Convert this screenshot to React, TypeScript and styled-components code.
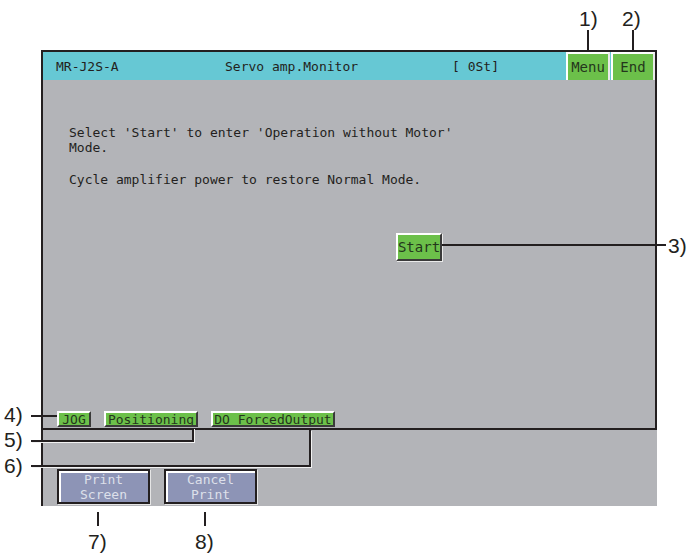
import React from 'react';
import styled, { createGlobalStyle } from 'styled-components';

const teal = '#66c8d4';
const panelGray = '#b3b4b8';
const green = '#6cc04a';
const lavender = '#8d94b6';
const ink = '#231f20';
const mono = `'DejaVu Sans Mono', 'Liberation Mono', monospace`;

const GlobalStyle = createGlobalStyle`
  html, body {
    margin: 0;
    padding: 0;
    background: #ffffff;
  }
`;

const Page = styled.div`
  position: relative;
  width: 692px;
  height: 554px;
  padding: 50px 0 0 41px;
  box-sizing: border-box;
  overflow: hidden;
`;

const Screen = styled.div`
  width: 616px;
  display: flex;
  flex-direction: column;
  font-family: ${mono};
  font-size: 13px;
  color: ${ink};
`;

const Header = styled.div`
  height: 30px;
  box-sizing: border-box;
  background: ${teal};
  border: 2px solid ${ink};
  border-bottom: none;
  display: flex;
  align-items: stretch;
  padding-left: 13px;
`;

const HeaderText = styled.div<{ $w?: number }>`
  display: flex;
  align-items: center;
  ${p => (p.$w ? `width: ${p.$w}px;` : 'flex: 1;')}
  white-space: pre;
`;

const GreenKey = styled.div<{ $w: number }>`
  width: ${p => p.$w}px;
  box-sizing: border-box;
  background: ${green};
  border-top: 2px solid #ffffff;
  border-left: 2px solid #ffffff;
  border-right: 2px solid #3a3a3a;
  border-bottom: 2px solid #3a3a3a;
  display: flex;
  align-items: center;
  justify-content: center;
  color: #24361c;
  white-space: pre;
`;

const HeaderKey = styled(GreenKey)`
  margin-left: 1px;
  font-size: 14px;
  border-right-color: #eaeaea;
  border-bottom: none;
`;

const Body = styled.div`
  height: 350px;
  box-sizing: border-box;
  background: ${panelGray};
  border: 2px solid ${ink};
  border-top: none;
  display: flex;
  flex-direction: column;
  padding: 45px 0 0 26px;
`;

const Message = styled.p`
  margin: 0;
  line-height: 15px;
  white-space: pre;
`;

const Paragraph = styled.div<{ $gap?: number }>`
  margin-top: ${p => p.$gap ?? 0}px;
`;

const StartKey = styled(GreenKey)`
  height: 28px;
  margin: 46px 0 0 327px;
  font-size: 14px;
  box-shadow: 1px 1px 0 #eaeaea;
`;

const ModeRow = styled.div`
  margin-top: auto;
  margin-left: -12px;
  margin-bottom: 1px;
  display: flex;
  gap: 13px;
`;

const ModeKey = styled(GreenKey)`
  height: 16px;
  line-height: 1;
  overflow: hidden;
`;

const Footer = styled.div`
  height: 76px;
  box-sizing: border-box;
  background: ${panelGray};
  border-left: 2px solid ${ink};
  display: flex;
  gap: 14px;
  padding: 39px 0 0 14px;
`;

const PrintKey = styled.div`
  width: 93px;
  height: 35px;
  box-sizing: border-box;
  background: ${lavender};
  border: 2px solid ${ink};
  box-shadow: inset 2px 2px 0 #ffffff, 1px 1px 0 #e5e5e5;
  display: flex;
  flex-direction: column;
  align-items: center;
  justify-content: center;
  color: #dde0ea;
  font-size: 13px;
  line-height: 15px;
  white-space: pre;
`;

const Callout = styled.span<{ $x: number; $y: number }>`
  position: absolute;
  left: ${p => p.$x}px;
  top: ${p => p.$y}px;
  font-family: 'Liberation Sans', Arial, sans-serif;
  font-size: 21px;
  line-height: 21px;
  color: ${ink};
`;

const Leader = styled.div<{ $x: number; $y: number; $w: number; $h: number }>`
  position: absolute;
  left: ${p => p.$x}px;
  top: ${p => p.$y}px;
  width: ${p => p.$w}px;
  height: ${p => p.$h}px;
  background: ${ink};
`;

const Elbow = styled.div<{ $x: number; $y: number; $w: number; $h: number }>`
  position: absolute;
  left: ${p => p.$x}px;
  top: ${p => p.$y}px;
  width: ${p => p.$w}px;
  height: ${p => p.$h}px;
  border-right: 2px solid ${ink};
  border-bottom: 2px solid ${ink};
  box-shadow: 1px 1px 0 #f2f2f2;
`;

export default function App() {
  return (
    <>
      <GlobalStyle />
      <Page>
        <Screen>
          <Header>
            <HeaderText $w={169}>MR-J2S-A</HeaderText>
            <HeaderText $w={227}>Servo amp.Monitor</HeaderText>
            <HeaderText>[ 0St]</HeaderText>
            <HeaderKey $w={44}>Menu</HeaderKey>
            <HeaderKey $w={44}>End</HeaderKey>
          </Header>
          <Body>
            <Paragraph>
              <Message>Select 'Start' to enter 'Operation without Motor'</Message>
              <Message>Mode.</Message>
            </Paragraph>
            <Paragraph $gap={17}>
              <Message>Cycle amplifier power to restore Normal Mode.</Message>
            </Paragraph>
            <StartKey $w={46}>Start</StartKey>
            <ModeRow>
              <ModeKey $w={34}>JOG</ModeKey>
              <ModeKey $w={94}>Positioning</ModeKey>
              <ModeKey $w={124}>DO ForcedOutput</ModeKey>
            </ModeRow>
          </Body>
          <Footer>
            <PrintKey>
              <span>Print</span>
              <span>Screen</span>
            </PrintKey>
            <PrintKey>
              <span>Cancel</span>
              <span>Print</span>
            </PrintKey>
          </Footer>
        </Screen>

        <Callout $x={579} $y={8}>1)</Callout>
        <Leader $x={587} $y={30} $w={2} $h={22} />
        <Callout $x={622} $y={8}>2)</Callout>
        <Leader $x={632} $y={30} $w={2} $h={22} />

        <Leader $x={442} $y={244} $w={224} $h={2} />
        <Callout $x={668} $y={235}>3)</Callout>

        <Callout $x={4} $y={404}>4)</Callout>
        <Leader $x={31} $y={415} $w={26} $h={2} />
        <Callout $x={4} $y={429}>5)</Callout>
        <Elbow $x={31} $y={428} $w={161} $h={12} />
        <Callout $x={4} $y={455}>6)</Callout>
        <Elbow $x={31} $y={430} $w={278} $h={35} />

        <Leader $x={97} $y={512} $w={2} $h={14} />
        <Callout $x={88} $y={531}>7)</Callout>
        <Leader $x={204} $y={512} $w={2} $h={14} />
        <Callout $x={195} $y={531}>8)</Callout>
      </Page>
    </>
  );
}
